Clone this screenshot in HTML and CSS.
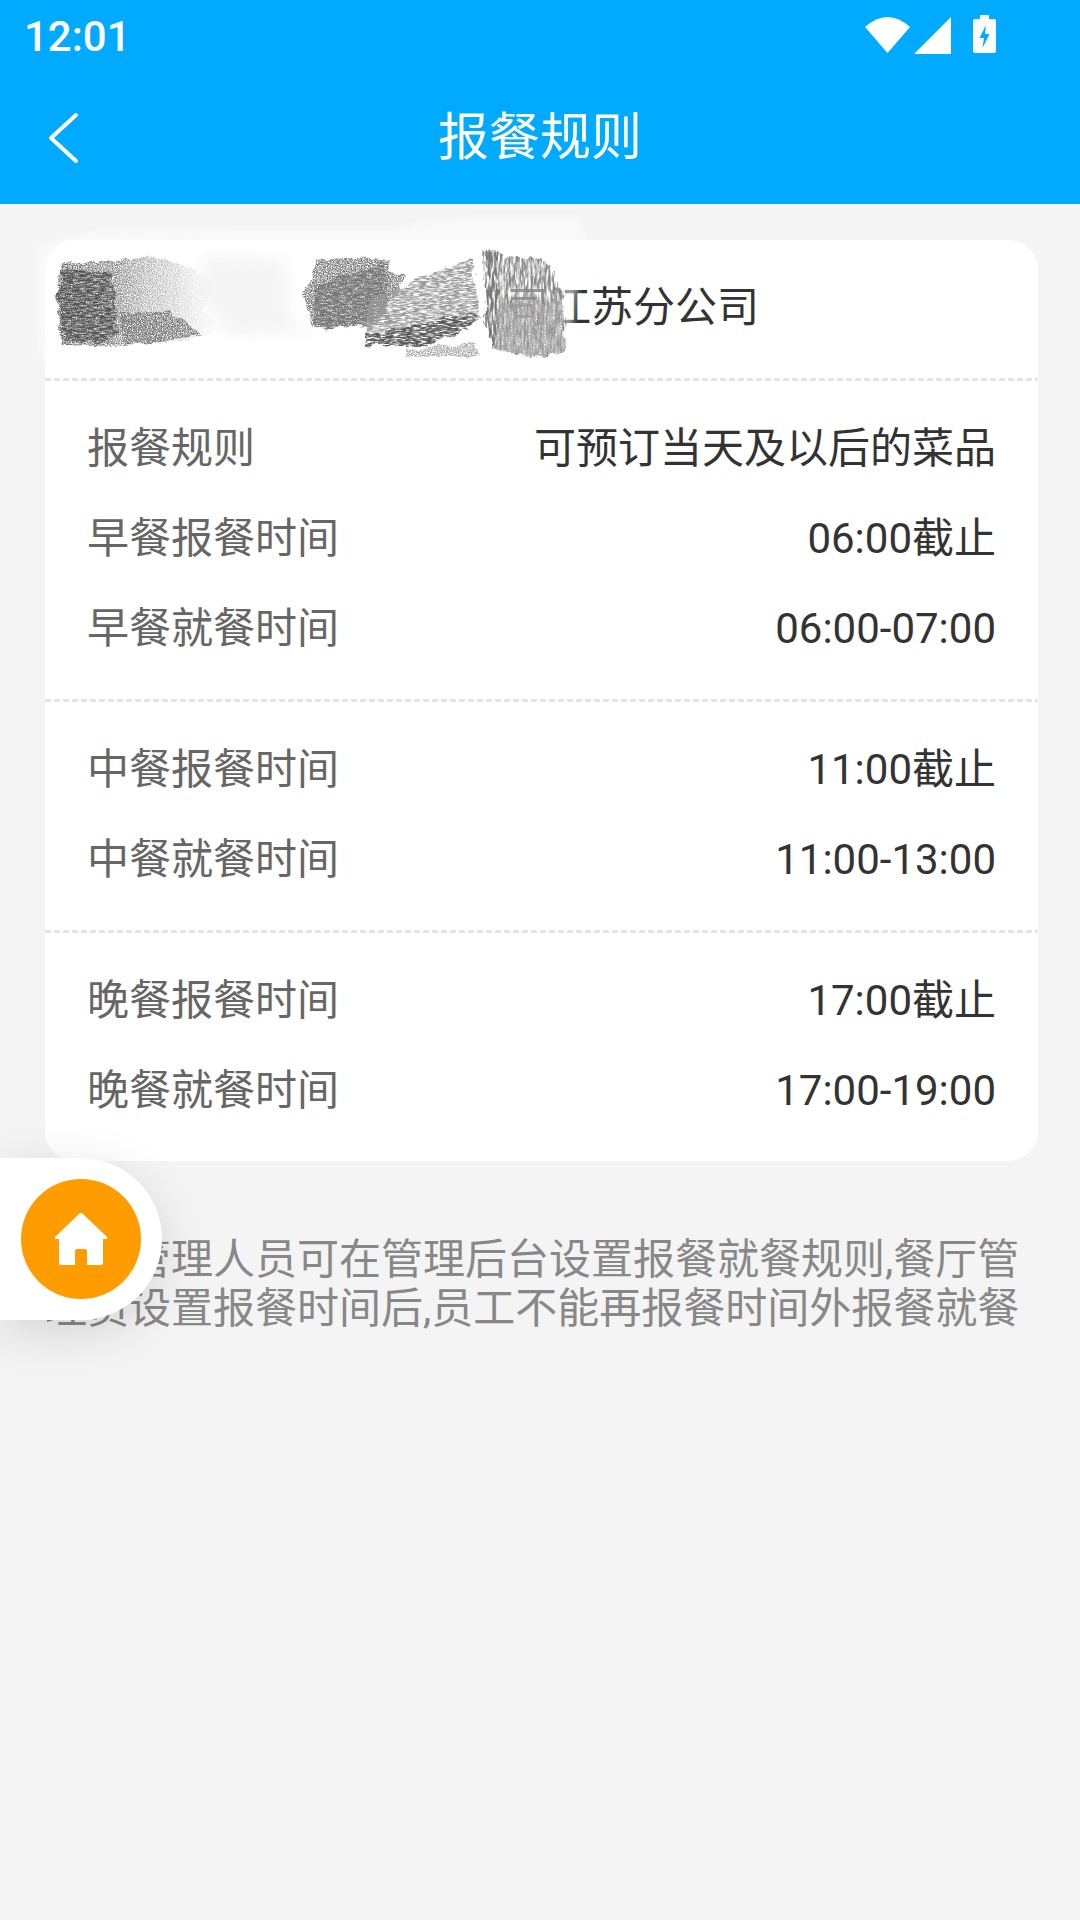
FILE: index.html
```html
<!DOCTYPE html>
<html lang="zh-CN">
<head>
    <meta charset="UTF-8">
    <meta name="viewport" content="width=device-width, initial-scale=1.0">
    <title>报餐规则</title>
    <link rel="stylesheet" href="styles.css">
</head>
<body>
    <div class="page">
        <!-- Header -->
        <header class="app-header">
            <div class="status-bar">
                <span class="status-time">12:01</span>
                <div class="status-icons">
                    <svg class="icon-wifi" width="45" height="36" viewBox="0 0 45 36"><path d="M22.5 36 0 10Q22.5-10 45 10Z" fill="#fff"/></svg>
                    <svg class="icon-signal" width="37" height="37" viewBox="0 0 37 37"><path d="M37 0V37H0Z" fill="#fff"/></svg>
                    <svg class="icon-battery" width="23" height="38" viewBox="0 0 23 38"><path d="M7 0h9v4h5a2 2 0 0 1 2 2v30a2 2 0 0 1-2 2H2a2 2 0 0 1-2-2V6a2 2 0 0 1 2-2h5Z" fill="#fff"/><path d="M13 10 6.500 23H11L9.500 33 16.500 19H12Z" fill="#00aaff"/></svg>
                </div>
            </div>
            <div class="toolbar">
                <svg class="back-icon" width="32" height="52" viewBox="0 0 32 52"><path d="M28 3 3 26l25 23" fill="none" stroke="#fff" stroke-width="4" stroke-linecap="round" stroke-linejoin="round"/></svg>
                <h1 class="toolbar-title">报餐规则</h1>
            </div>
        </header>

        <!-- Rules card -->
        <main class="rules-card">
            <div class="card-title">司江苏分公司</div>

            <section class="rules-group">
                <div class="rule-row"><span class="rule-label">报餐规则</span><span class="rule-value">可预订当天及以后的菜品</span></div>
                <div class="rule-row"><span class="rule-label">早餐报餐时间</span><span class="rule-value">06:00截止</span></div>
                <div class="rule-row"><span class="rule-label">早餐就餐时间</span><span class="rule-value">06:00-07:00</span></div>
            </section>

            <section class="rules-group">
                <div class="rule-row"><span class="rule-label">中餐报餐时间</span><span class="rule-value">11:00截止</span></div>
                <div class="rule-row"><span class="rule-label">中餐就餐时间</span><span class="rule-value">11:00-13:00</span></div>
            </section>

            <section class="rules-group">
                <div class="rule-row"><span class="rule-label">晚餐报餐时间</span><span class="rule-value">17:00截止</span></div>
                <div class="rule-row"><span class="rule-label">晚餐就餐时间</span><span class="rule-value">17:00-19:00</span></div>
            </section>
        </main>

        <p class="rules-note">餐厅管理人员可在管理后台设置报餐就餐规则,餐厅管理员设置报餐时间后,员工不能再报餐时间外报餐就餐</p>

        <!-- Pencil scribble over the company name -->
        <svg class="scribble" width="570" height="170" viewBox="30 210 570 170">
            <defs>
                <filter id="grainFine" x="-10%" y="-10%" width="120%" height="120%">
                    <feTurbulence type="fractalNoise" baseFrequency="0.08" numOctaves="3" seed="3" result="warp"/>
                    <feDisplacementMap in="SourceGraphic" in2="warp" scale="10" xChannelSelector="R" yChannelSelector="G" result="shape"/>
                    <feTurbulence type="fractalNoise" baseFrequency="0.8 0.9" numOctaves="2" seed="4" result="noise"/>
                    <feColorMatrix in="noise" type="matrix" values="0 0 0 0 0  0 0 0 0 0  0 0 0 0 0  2.600 0 0 0 -0.700" result="mask"/>
                    <feComposite in="shape" in2="mask" operator="in"/>
                    <feGaussianBlur stdDeviation="0.5"/>
                </filter>
                <filter id="grainFlat" x="-10%" y="-10%" width="120%" height="120%">
                    <feTurbulence type="fractalNoise" baseFrequency="0.08" numOctaves="3" seed="7" result="warp"/>
                    <feDisplacementMap in="SourceGraphic" in2="warp" scale="10" xChannelSelector="R" yChannelSelector="G" result="shape"/>
                    <feTurbulence type="fractalNoise" baseFrequency="0.15 0.7" numOctaves="3" seed="9" result="noise"/>
                    <feColorMatrix in="noise" type="matrix" values="0 0 0 0 0  0 0 0 0 0  0 0 0 0 0  2.800 0 0 0 -0.800" result="mask"/>
                    <feComposite in="shape" in2="mask" operator="in"/>
                    <feGaussianBlur stdDeviation="0.5"/>
                </filter>
                <filter id="grainTall" x="-10%" y="-10%" width="120%" height="120%">
                    <feTurbulence type="fractalNoise" baseFrequency="0.1" numOctaves="3" seed="5" result="warp"/>
                    <feDisplacementMap in="SourceGraphic" in2="warp" scale="10" xChannelSelector="R" yChannelSelector="G" result="shape"/>
                    <feTurbulence type="fractalNoise" baseFrequency="0.45 0.08" numOctaves="3" seed="12" result="noise"/>
                    <feColorMatrix in="noise" type="matrix" values="0 0 0 0 0  0 0 0 0 0  0 0 0 0 0  2.800 0 0 0 -0.850" result="mask"/>
                    <feComposite in="shape" in2="mask" operator="in"/>
                    <feGaussianBlur stdDeviation="0.5"/>
                </filter>
                <filter id="haze"><feGaussianBlur stdDeviation="3"/></filter>
                <filter id="soft"><feGaussianBlur stdDeviation="8"/></filter>
                <linearGradient id="fadeRight"><stop offset="0" stop-color="#666"/><stop offset=".35" stop-color="#888"/><stop offset=".7" stop-color="#bbb" stop-opacity=".7"/><stop offset="1" stop-color="#ddd" stop-opacity="0"/></linearGradient>
            </defs>
            <!-- white wash -->
            <path d="M36 246 90 232 230 228 390 228 470 217 580 217 585 240 566 370 40 362Z" fill="#fff" opacity=".5" filter="url(#haze)"/>
            <path d="M60 250H380L480 244 495 356H60Z" fill="#fff" filter="url(#haze)"/>
            <!-- left patch -->
            <path d="M60 264 160 258 175 264 215 280 200 310 225 330 180 342 125 346 62 344 56 300Z" fill="url(#fadeRight)" filter="url(#grainFine)"/>
            <path d="M62 272H112L118 334 100 342 64 340 58 298Z" fill="#555" filter="url(#grainFlat)"/>
            <path d="M118 312H170L205 334 150 344 125 344Z" fill="#777" filter="url(#grainFine)"/>
            <path d="M205 255 285 260 290 320 320 332 230 335 200 300Z" fill="#eee" opacity=".6" filter="url(#soft)"/>
            <!-- middle patch -->
            <path d="M318 262 330 257 390 260 388 272 408 276 372 324 312 328 304 295Z" fill="#777" filter="url(#grainFine)"/>
            <path d="M314 286 385 262 390 324 314 328Z" fill="#777" filter="url(#grainFlat)"/>
            <path d="M372 298 472 258 480 318 430 344 368 344 366 325Z" fill="#999" filter="url(#grainFlat)"/>
            <path d="M366 332 420 324 478 312 468 330 428 346 368 346Z" fill="#555" filter="url(#grainFlat)"/>
            <path d="M408 350 475 344 478 355 408 358Z" fill="#aaa" filter="url(#grainFine)"/>
            <!-- vertical strokes -->
            <path d="M483 250 495 250 505 256 540 258 552 268 562 290 565 352 530 358 510 352 495 350 485 322Z" fill="#888" filter="url(#grainTall)"/>
            <path d="M485 252H498L500 325 494 350 485 322Z" fill="#777" filter="url(#grainTall)"/>
            <path d="M497 302 563 302 565 352 530 358 510 352 497 350Z" fill="#aaa" filter="url(#grainFine)"/>
        </svg>

        <!-- Floating home button -->
        <div class="home-fab">
            <div class="home-circle">
                <svg width="52" height="52" viewBox="0 0 52 52"><path d="M26 0a3 3 0 0 1 2 1l23.500 22.500a1 1 0 0 1-.5 2.500h-3v24a2 2 0 0 1-2 2H32V38a2 2 0 0 0-2-2h-8a2 2 0 0 0-2 2v14H6a2 2 0 0 1-2-2V26H1a1 1 0 0 1-.5-2.500L24 1a3 3 0 0 1 2-1Z" fill="#fff"/></svg>
            </div>
        </div>
    </div>
</body>
</html>
```

FILE: styles.css
```css
/* Global Styles */
* {
    box-sizing: border-box;
}

body {
    margin: 0;
    padding: 0;
    background-color: #f4f4f4;
    font-family: Roboto, "Noto Sans CJK SC", sans-serif;
}

.page {
    position: relative;
    width: 1080px;
    min-height: 1920px;
    overflow: hidden;
}

/* Header */
.app-header {
    background-color: #00aaff;
    height: 204px;
    color: #fff;
}

.status-bar {
    display: flex;
    justify-content: space-between;
    height: 72px;
    padding: 13px 84px 0 24px;
}

.status-time {
    font-size: 42px;
    line-height: 48px;
    font-weight: 500;
}

.status-icons {
    display: flex;
    align-items: flex-start;
    padding-top: 2px;
}

.icon-wifi {
    margin-top: 2px;
}

.icon-signal {
    margin-left: 4px;
    margin-top: 2px;
}

.icon-battery {
    margin-left: 22px;
}

.toolbar {
    position: relative;
    height: 132px;
    display: flex;
    justify-content: center;
    align-items: center;
}

.back-icon {
    position: absolute;
    left: 48px;
    top: 40px;
}

.toolbar-title {
    margin: 0 0 1px;
    font-size: 51px;
    line-height: 60px;
    font-weight: 400;
}

/* Rules Card */
.rules-card {
    margin: 36px 42px 0 45px;
    background-color: #fff;
    border-radius: 30px;
}

.card-title {
    height: 138px;
    padding-left: 462px;
    font-size: 42px;
    line-height: 136px;
    color: #333;
}

.rules-group {
    padding: 26px 42px 25px 42px;
    background-image: repeating-linear-gradient(to right, #e4e4e4 0, #e4e4e4 6px, transparent 6px, transparent 9px);
    background-size: 100% 3px;
    background-repeat: no-repeat;
    background-position: top left;
}

.rule-row {
    display: flex;
    justify-content: space-between;
    align-items: center;
    height: 90px;
    font-size: 42px;
    line-height: 50px;
}

.rule-label {
    color: #666;
}

.rule-value {
    color: #333;
}

/* Note */
.rules-note {
    margin: 74px 45px 0;
    font-size: 42px;
    line-height: 49px;
    color: #888;
}

/* Scribble */
.scribble {
    position: absolute;
    left: 30px;
    top: 210px;
}

/* Home Button */
.home-fab {
    position: absolute;
    left: 0;
    top: 1158px;
    width: 162px;
    height: 162px;
    display: flex;
    justify-content: center;
    align-items: center;
    background-color: #fff;
    border-radius: 0 81px 81px 0;
    box-shadow: 0 12px 50px rgba(0, 0, 0, 0.13);
}

.home-circle {
    width: 120px;
    height: 120px;
    display: flex;
    justify-content: center;
    align-items: center;
    background-color: #ff9d00;
    border-radius: 50%;
}
```
